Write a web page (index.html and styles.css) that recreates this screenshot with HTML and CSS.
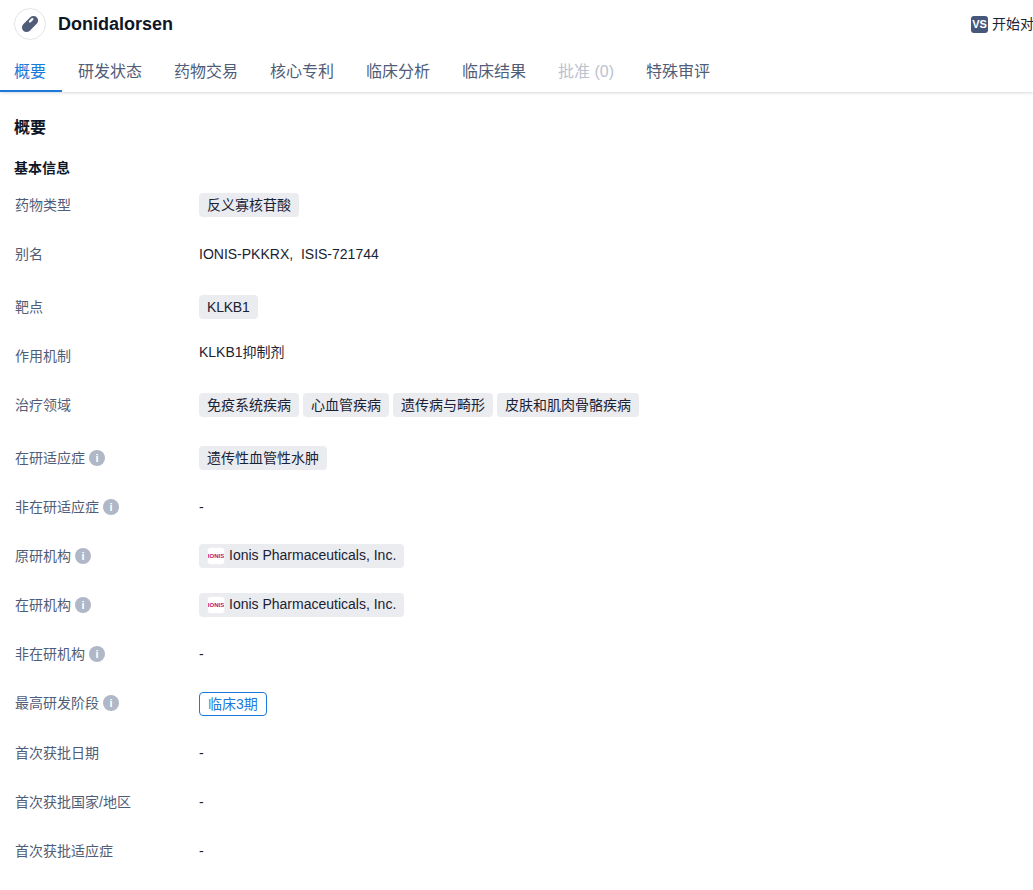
FILE: index.html
```html
<!DOCTYPE html>
<html lang="zh-CN">
<head>
<meta charset="utf-8">
<title>Donidalorsen</title>
<link rel="stylesheet" href="styles.css">
</head>
<body>
<header class="top">
  <div class="title-bar">
    <span class="drug-icon">
      <svg viewBox="0 0 20 20" width="20" height="20"><g transform="rotate(-45 10 10)"><rect x="0.5" y="5.4" width="19" height="9.2" rx="4.6" fill="#4f5d78"/><rect x="10.6" y="7.1" width="5.6" height="2.2" rx="1.1" fill="#fff"/></g></svg>
    </span>
    <h1 class="drug-name">Donidalorsen</h1>
    <div class="compare">
      <span class="vs">VS</span>
      <span class="compare-text">开始对比</span>
    </div>
  </div>
  <nav class="tabs">
    <a class="tab active">概要</a>
    <a class="tab">研发状态</a>
    <a class="tab">药物交易</a>
    <a class="tab">核心专利</a>
    <a class="tab">临床分析</a>
    <a class="tab">临床结果</a>
    <a class="tab disabled">批准 (0)</a>
    <a class="tab">特殊审评</a>
  </nav>
</header>
<main class="content">
  <h2 class="section-title">概要</h2>
  <h3 class="sub-title">基本信息</h3>
  <div class="rows">
    <div class="row"><div class="label">药物类型</div><div class="value"><span class="tag">反义寡核苷酸</span></div></div>
    <div class="row row-extra"><div class="label">别名</div><div class="value text">IONIS-PKKRX,&nbsp; ISIS-721744</div></div>
    <div class="row"><div class="label">靶点</div><div class="value"><span class="tag tag-tight">KLKB1</span></div></div>
    <div class="row"><div class="label">作用机制</div><div class="value text text-high">KLKB1抑制剂</div></div>
    <div class="row row-extra"><div class="label">治疗领域</div><div class="value"><span class="tag">免疫系统疾病</span><span class="tag">心血管疾病</span><span class="tag">遗传病与畸形</span><span class="tag">皮肤和肌肉骨骼疾病</span></div></div>
    <div class="row"><div class="label">在研适应症<i class="info">i</i></div><div class="value"><span class="tag">遗传性血管性水肿</span></div></div>
    <div class="row"><div class="label">非在研适应症<i class="info">i</i></div><div class="value text">-</div></div>
    <div class="row"><div class="label">原研机构<i class="info">i</i></div><div class="value"><span class="tag org"><span class="org-logo">IONIS</span><span class="org-name">Ionis Pharmaceuticals, Inc.</span></span></div></div>
    <div class="row"><div class="label">在研机构<i class="info">i</i></div><div class="value"><span class="tag org"><span class="org-logo">IONIS</span><span class="org-name">Ionis Pharmaceuticals, Inc.</span></span></div></div>
    <div class="row"><div class="label">非在研机构<i class="info">i</i></div><div class="value text">-</div></div>
    <div class="row row-stage"><div class="label">最高研发阶段<i class="info">i</i></div><div class="value"><span class="stage">临床3期</span></div></div>
    <div class="row"><div class="label">首次获批日期</div><div class="value text">-</div></div>
    <div class="row"><div class="label">首次获批国家/地区</div><div class="value text">-</div></div>
    <div class="row"><div class="label">首次获批适应症</div><div class="value text">-</div></div>
  </div>
</main>
</body>
</html>
```

FILE: styles.css
```css
* { box-sizing: border-box; }
html, body { height: 100%; }
body {
  margin: 0;
  overflow: hidden;
  background: #fff;
  color: #1a2233;
  font-family: "Liberation Sans", "Noto Sans CJK SC", sans-serif;
  font-size: 14px;
  line-height: 20px;
}
.top {
  box-shadow: 0 1px 3px rgba(30, 40, 60, 0.18);
  height: 92px;
}
.title-bar {
  display: flex;
  align-items: center;
  height: 48px;
  padding-left: 14px;
}
.drug-icon {
  width: 32px;
  height: 32px;
  border: 1px solid #e3e5ea;
  border-radius: 50%;
  display: flex;
  align-items: center;
  justify-content: center;
  flex: none;
}
.drug-name {
  margin: 0 0 0 12px;
  font-size: 18px;
  line-height: 24px;
  font-weight: 700;
  color: #0f1626;
}
.compare {
  margin-left: auto;
  display: flex;
  align-items: center;
  gap: 4px;
  width: 62px;
  flex: none;
  white-space: nowrap;
  color: #1a2233;
}
.vs {
  width: 17px;
  height: 17px;
  flex: none;
  border-radius: 3px;
  background: #47577a;
  color: #fff;
  font-size: 11px;
  font-weight: 700;
  line-height: 17px;
  text-align: center;
}
.tabs {
  display: flex;
  height: 44px;
}
.tab {
  padding: 4px 16px 0;
  font-size: 16px;
  line-height: 40px;
  color: #4f5d78;
  white-space: nowrap;
}
.tab.active {
  padding-left: 14px;
  color: #1a7ad9;
  border-bottom: 2px solid #1a7ad9;
}
.tab.disabled { color: #bcc2d0; }
.content { padding: 0 14px; }
.section-title {
  margin: 26px 0 0;
  font-size: 16px;
  line-height: 20px;
  font-weight: 700;
  color: #0f1626;
}
.sub-title {
  margin: 20px 0 0;
  font-size: 14px;
  line-height: 20px;
  font-weight: 700;
  color: #0f1626;
}
.rows { margin-top: 15px; }
.row {
  display: flex;
  align-items: center;
  min-height: 24px;
  margin-bottom: 25px;
}
.row-extra { margin-bottom: 29px; }
.row-stage { align-items: flex-start; }
.label {
  width: 185px;
  min-height: 24px;
  flex: none;
  padding-left: 1px;
  display: flex;
  align-items: center;
  color: #4f5d78;
}
.value {
  display: flex;
  gap: 4px;
  align-items: center;
}
.text { color: #1a2233; }
.text-high { align-self: flex-start; margin-top: -2px; }
.tag {
  display: inline-flex;
  align-items: center;
  height: 24px;
  padding: 0 8px;
  border-radius: 4px;
  background: #ebecf0;
  white-space: nowrap;
}
.tag-tight { letter-spacing: -0.2px; }
.org-name { margin-top: -2px; }
.org-logo {
  display: flex;
  align-items: center;
  justify-content: center;
  width: 18px;
  height: 18px;
  margin-right: 4px;
  border: 1px solid #f0f0f3;
  border-radius: 3px;
  background: #fff;
  color: #b8116b;
  font-size: 6px;
  font-weight: 700;
  line-height: 16px;
  overflow: hidden;
}
.info {
  width: 16px;
  height: 16px;
  margin-left: 4px;
  border-radius: 50%;
  background: #b0b7c6;
  color: #fff;
  font-family: "Liberation Sans", sans-serif;
  font-size: 11px;
  font-style: normal;
  font-weight: 700;
  line-height: 16px;
  text-align: center;
  flex: none;
}
.stage {
  display: inline-flex;
  align-items: center;
  height: 24px;
  margin-top: 1px;
  padding: 0 8px;
  border: 1px solid #1a7ad9;
  border-radius: 4px;
  color: #1a7ad9;
  white-space: nowrap;
}
```
